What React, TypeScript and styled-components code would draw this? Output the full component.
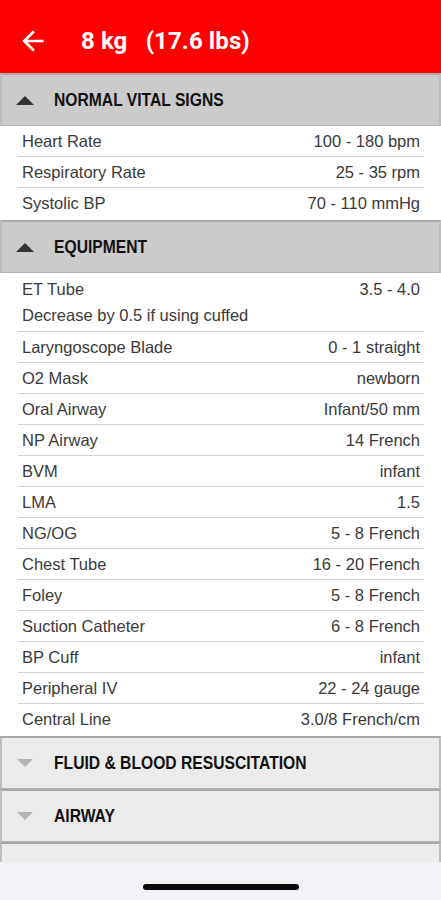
import React from 'react';
import styled, { createGlobalStyle } from 'styled-components';

const GlobalStyle = createGlobalStyle`
  html, body {
    margin: 0;
    padding: 0;
    background: #ffffff;
  }
  body {
    font-family: 'Liberation Sans', Arial, sans-serif;
  }
`;

interface Item {
  label: string;
  value: string;
  note?: string;
}

interface Section {
  title: string;
  open: boolean;
  items: Item[];
}

const sections: Section[] = [
  {
    title: 'NORMAL VITAL SIGNS',
    open: true,
    items: [
      { label: 'Heart Rate', value: '100 - 180 bpm' },
      { label: 'Respiratory Rate', value: '25 - 35 rpm' },
      { label: 'Systolic BP', value: '70 - 110 mmHg' },
    ],
  },
  {
    title: 'EQUIPMENT',
    open: true,
    items: [
      { label: 'ET Tube', value: '3.5 - 4.0', note: 'Decrease by 0.5 if using cuffed' },
      { label: 'Laryngoscope Blade', value: '0 - 1 straight' },
      { label: 'O2 Mask', value: 'newborn' },
      { label: 'Oral Airway', value: 'Infant/50 mm' },
      { label: 'NP Airway', value: '14 French' },
      { label: 'BVM', value: 'infant' },
      { label: 'LMA', value: '1.5' },
      { label: 'NG/OG', value: '5 - 8 French' },
      { label: 'Chest Tube', value: '16 - 20 French' },
      { label: 'Foley', value: '5 - 8 French' },
      { label: 'Suction Catheter', value: '6 - 8 French' },
      { label: 'BP Cuff', value: 'infant' },
      { label: 'Peripheral IV', value: '22 - 24 gauge' },
      { label: 'Central Line', value: '3.0/8 French/cm' },
    ],
  },
  { title: 'FLUID & BLOOD RESUSCITATION', open: false, items: [] },
  { title: 'AIRWAY', open: false, items: [] },
  { title: 'MEDICATIONS', open: false, items: [] },
];

const Screen = styled.div`
  width: 441px;
  height: 900px;
  display: flex;
  flex-direction: column;
  overflow: hidden;
  background: #ffffff;
`;

const AppBar = styled.header`
  height: 73px;
  box-sizing: border-box;
  flex-shrink: 0;
  background: #ff0000;
  display: flex;
  align-items: center;
  padding: 9px 0 0 17px;
  gap: 32px;
  color: #ffffff;
`;

const BackButton = styled.button`
  border: 0;
  background: none;
  padding: 0;
  width: 32px;
  height: 32px;
  display: flex;
  align-items: center;
  justify-content: center;
`;

const Title = styled.h1`
  margin: 0;
  font-family: Roboto, 'Liberation Sans', sans-serif;
  font-weight: 700;
  font-size: 24px;
  letter-spacing: 0.1px;
  white-space: pre;
`;

const Content = styled.main`
  flex: 1;
  overflow: hidden;
`;

const SectionHeader = styled.div<{ $open: boolean }>`
  height: 50px;
  display: flex;
  align-items: center;
  gap: 20px;
  padding-left: 14px;
  background: ${({ $open }) => ($open ? '#cbcbcb' : '#ebebeb')};
  border-top: 2px solid #a9a9a9;
  border-bottom: 1px solid #b4b4b4;
  border-left: 2px solid #bdbdbd;
  border-right: 2px solid #bdbdbd;
`;

const SectionTitle = styled.span`
  display: inline-block;
  font-family: 'Liberation Sans', Arial, sans-serif;
  font-weight: 700;
  font-size: 18px;
  color: #111111;
  transform: scaleX(0.87);
  transform-origin: left center;
  white-space: nowrap;
`;

const Caret = styled.svg`
  width: 18px;
  height: 9px;
  flex-shrink: 0;
`;

const List = styled.div`
  margin: 0 17px 0 18px;
  padding-bottom: 2px;
`;

const Row = styled.div`
  padding: 0 4px;
  border-bottom: 1px solid #d0d0d0;
  &:last-child {
    border-bottom: 0;
  }
`;

const RowLine = styled.div<{ $tall?: boolean }>`
  height: ${({ $tall }) => ($tall ? 32 : 30)}px;
  display: flex;
  align-items: center;
  justify-content: space-between;
  font-size: 16.5px;
  color: #3a3a3a;
`;

const Note = styled.div`
  height: 26px;
  line-height: 20px;
  font-size: 16.5px;
  color: #3a3a3a;
`;

const SystemBar = styled.div`
  height: 38px;
  flex-shrink: 0;
  background: #f0f2f5;
  display: flex;
  justify-content: center;
  padding-top: 22px;
  box-sizing: border-box;
`;

const HomeIndicator = styled.div`
  width: 156px;
  height: 6px;
  border-radius: 3px;
  background: #0a0a0a;
`;

const App = () => (
  <Screen>
    <GlobalStyle />
    <AppBar>
      <BackButton aria-label="Back">
        <svg width="32" height="32" viewBox="0 0 24 24">
          <path
            d="M20 11H7.83l5.59-5.59L12 4l-8 8 8 8 1.41-1.41L7.83 13H20v-2z"
            fill="#ffffff"
          />
        </svg>
      </BackButton>
      <Title>{'8 kg   (17.6 lbs)'}</Title>
    </AppBar>
    <Content>
      {sections.map((s) => (
        <section key={s.title}>
          <SectionHeader $open={s.open}>
            <Caret viewBox="0 0 18 9">
              {s.open ? (
                <path d="M0 9 L9 0 L18 9 Z" fill="#333333" />
              ) : (
                <path d="M1 0 L17 0 L9 8 Z" fill="#b3b3b3" />
              )}
            </Caret>
            <SectionTitle>{s.title}</SectionTitle>
          </SectionHeader>
          {s.open && (
            <List>
              {s.items.map((it) => (
                <Row key={it.label}>
                  <RowLine $tall={!!it.note}>
                    <span>{it.label}</span>
                    <span>{it.value}</span>
                  </RowLine>
                  {it.note && <Note>{it.note}</Note>}
                </Row>
              ))}
            </List>
          )}
        </section>
      ))}
    </Content>
    <SystemBar>
      <HomeIndicator />
    </SystemBar>
  </Screen>
);

export default App;
